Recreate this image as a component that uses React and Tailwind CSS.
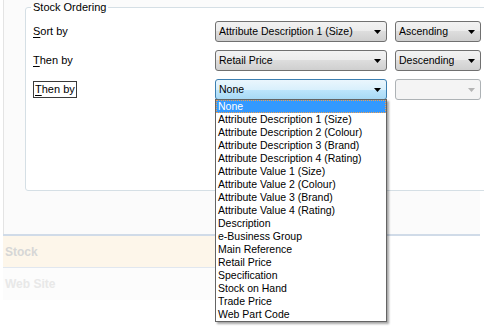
const options = [
  "None",
  "Attribute Description 1 (Size)",
  "Attribute Description 2 (Colour)",
  "Attribute Description 3 (Brand)",
  "Attribute Description 4 (Rating)",
  "Attribute Value 1 (Size)",
  "Attribute Value 2 (Colour)",
  "Attribute Value 3 (Brand)",
  "Attribute Value 4 (Rating)",
  "Description",
  "e-Business Group",
  "Main Reference",
  "Retail Price",
  "Specification",
  "Stock on Hand",
  "Trade Price",
  "Web Part Code",
];

function Arrow({ disabled }) {
  return (
    <svg width="7" height="4" viewBox="0 0 7 4" className="shrink-0">
      <path d="M0 0h7L3.5 4z" fill={disabled ? "#b4b4b4" : "#000"} />
    </svg>
  );
}

function Combo({ value, width, variant = "normal" }) {
  const look = {
    normal:
      "border-[#707070] bg-[linear-gradient(to_bottom,#f2f2f2_0%,#ebebeb_50%,#dddddd_50%,#cfcfcf_100%)]",
    focused:
      "border-[#3c7fb1] bg-[linear-gradient(to_bottom,#eaf6fd_0%,#d9f0fc_50%,#bee6fd_50%,#a7d9f5_100%)]",
    disabled: "border-[#adb2b5] bg-[#f4f4f4]",
  }[variant];

  return (
    <div
      className={`flex items-center justify-between h-[21px] border rounded-[3px] pl-[3px] pr-[5px] text-[10.5px] leading-none ${look} ${width}`}
    >
      <span className="truncate">{value}</span>
      <Arrow disabled={variant === "disabled"} />
    </div>
  );
}

export default function App() {
  return (
    <div className="relative w-[484px] h-[328px] overflow-hidden bg-white font-['Liberation_Sans',Arial,sans-serif] text-[11px] text-black">
      {/* Options panel */}
      <div className="ml-[3px] w-[477px] h-[234px] border-l border-[#e4e4e4] bg-[#fbfbfb] pl-[21px] pt-[1px]">
        <fieldset className="w-[470px] h-[190px] border border-[#d5dfe5] rounded-[3px] bg-white pl-[7px]">
          <legend className="-ml-[2px] px-[2px] leading-[13px]">Stock Ordering</legend>

          <div className="mt-[7px] flex flex-col gap-[8px]">
            <div className="flex items-center h-[21px]">
              <div className="w-[182px]">
                <span className="underline underline-offset-2">S</span>ort by
              </div>
              <Combo value="Attribute Description 1 (Size)" width="w-[172px]" />
              <div className="ml-[8px]">
                <Combo value="Ascending" width="w-[86px]" />
              </div>
            </div>

            <div className="flex items-center h-[21px]">
              <div className="w-[182px]">
                <span className="underline underline-offset-2">T</span>hen by
              </div>
              <Combo value="Retail Price" width="w-[172px]" />
              <div className="ml-[8px]">
                <Combo value="Descending" width="w-[86px]" />
              </div>
            </div>

            <div className="flex items-center h-[21px]">
              <div className="w-[182px]">
                <span className="inline-block border border-[#3a3a3a] px-[1px] py-[1px] leading-[13px]">
                  <span className="underline underline-offset-2">T</span>hen by
                </span>
              </div>
              <Combo value="None" width="w-[172px]" variant="focused" />
              <div className="ml-[8px]">
                <Combo value="" width="w-[86px]" variant="disabled" />
              </div>
            </div>
          </div>
        </fieldset>
      </div>

      {/* Section rows */}
      <div className="ml-[3px] w-[477px] h-[2px] bg-[#d0dbe8]" />
      <div className="ml-[3px] w-[384px] h-[31px] bg-[#fdf6ea] flex items-center pl-[2px] font-bold text-[12px] text-[#d6d6d6]">
        Stock
      </div>
      <div className="ml-[3px] w-[384px] h-[1px] bg-[#e1e7ef]" />
      <div className="ml-[3px] w-[384px] h-[32px] bg-[#fcfcfc] flex items-center pl-[2px] font-bold text-[12px] text-[#e8e8e8]">
        Web Site
      </div>

      {/* Open drop-down list */}
      <div className="absolute left-[215px] top-[99px] w-[172px] border border-[#646464] bg-white shadow-[2px_2px_2px_rgba(0,0,0,0.35)] text-[10.5px]">
        {options.map((o, i) =>
          i === 0 ? (
            <div
              key={o}
              className="h-[13px] leading-[11px] bg-[#3399ff] text-white border border-dotted border-[#f0a050] pl-[1px]"
            >
              {o}
            </div>
          ) : (
            <div key={o} className="h-[13px] leading-[13px] pl-[2px] whitespace-nowrap">
              {o}
            </div>
          )
        )}
      </div>
    </div>
  );
}
